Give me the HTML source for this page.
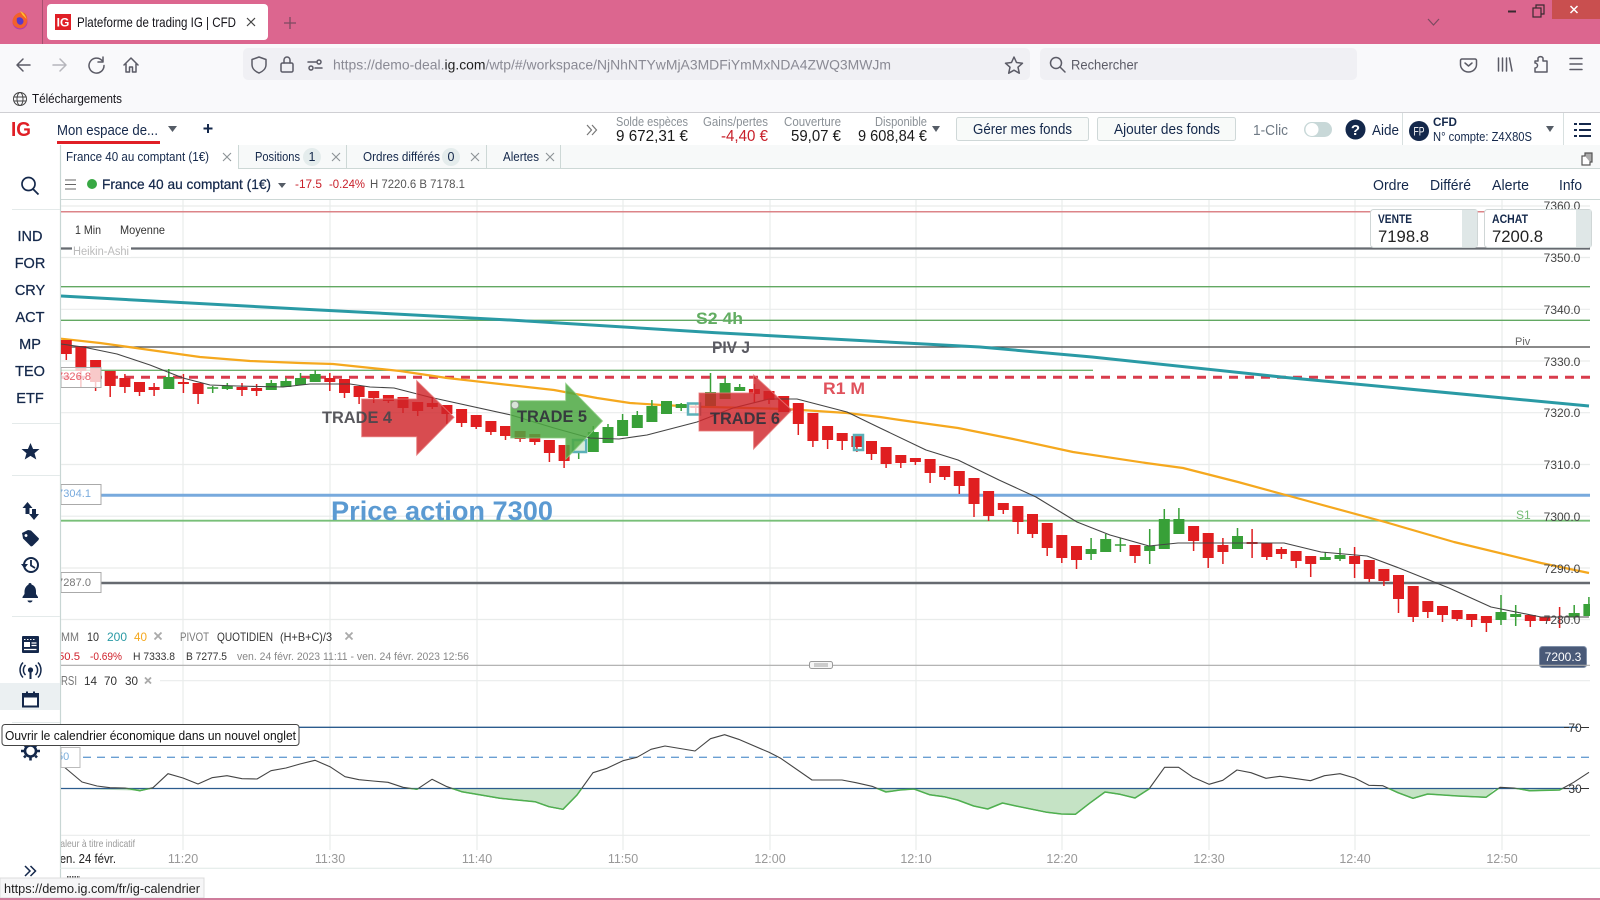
<!DOCTYPE html>
<html lang="fr"><head><meta charset="utf-8"><title>Plateforme de trading IG | CFD</title>
<style>
html,body{margin:0;padding:0;background:#fff;width:1600px;height:900px;overflow:hidden}
svg{display:block;font-family:"Liberation Sans",sans-serif}
.g{stroke:#e9eceb;stroke-width:1.2;fill:none}
.ic{fill:none;stroke:#5b5b66;stroke-width:1.5;stroke-linecap:round;stroke-linejoin:round}
.nv{font-size:14.5px;fill:#14284b;text-anchor:middle;stroke:#14284b;stroke-width:.25}
.nf{fill:#14284b}
.ns{fill:none;stroke:#14284b;stroke-width:2}
.lb{font-size:12.5px;fill:#8a9096;text-anchor:end}
.vl{font-size:16px;fill:#1a1a1a;text-anchor:end}
.tb{font-size:12.5px;fill:#14284b}
.x{stroke:#8c9396;stroke-width:1.1;fill:none}
.ax{font-size:12px;fill:#444;text-anchor:middle}
.tm{font-size:12.5px;fill:#999;text-anchor:middle}
.lg{font-size:12px;fill:#333}
</style></head><body>
<svg width="1600" height="900" viewBox="0 0 1600 900" xmlns="http://www.w3.org/2000/svg">
<defs>
<clipPath id="cc"><rect x="61" y="200" width="1529" height="465"/></clipPath>
<clipPath id="lc"><rect x="61" y="200" width="1529" height="668"/></clipPath>
<clipPath id="rb"><rect x="61" y="788.6" width="1529" height="60"/></clipPath>
<polyline id="rsi" fill="none" stroke-linejoin="round" points="61,764 63,766 82,782 97,786 110,787.7 125,788 140,790.7 153,787.7 168,773.7 183,778 198,784 212,777.7 227,775.7 242,778.7 257,779 271,770.7 286,768 300,764 315,760.3 330,766.7 345,776.7 359,779.7 373,781 388,782.3 403,787.3 417,789.3 432,779.3 447,786.7 461.7,791.7 476.7,794.3 500,798.3 535,801.7 549,806.7 563,809.3 577,795 593,772.7 607,768.3 623,760.7 637,757.3 651,749.3 665,746 695,751 710.5,738.7 724.6,734.7 738.6,739.3 769,752.3 780.7,758.3 812,780 842,780 856,782.7 872,786.3 886,792 900,790 914,789 929.5,794.7 944,796.7 957.5,800 973.7,806 987.7,809 1002.5,803 1016,806 1047,812.3 1061.4,814 1075.4,814.3 1089.5,803.3 1105,792 1120,794.3 1135,798 1149,789 1164.6,767.3 1178.6,767.3 1193,777.3 1209,784.3 1222.8,780.3 1237,770 1251,772.7 1266,778.3 1280,776.3 1310.5,780.7 1324.5,775.7 1340,773.7 1354.7,778 1368.8,785.3 1382.8,785.7 1398,792.7 1413,798.3 1427.7,794 1458,796 1486,797.3 1500,787.3 1514,788 1529.5,790.7 1559.6,790 1573.7,782.3 1589,772.3"/>
</defs>

<!-- Browser title bar -->
<rect width="1600" height="44" fill="#dc668f"/>
<line x1="42.5" y1="0" x2="42.5" y2="44" stroke="#a84f70"/>
<circle cx="20" cy="22" r="7.5" fill="#b03bb0"/>
<path d="M12.5 21c.5-6 6-9.500 10.500-8.500 4 1 5 6 4 10-1 4-5 7-9 5.500-3-1-6-3.500-5.500-7z" fill="#f2602c"/>
<path d="M17 18c3-2 6 0 6.500 3 0 3-2.500 4.500-4.500 3.500-2-1-2.800-3.500-2-6.500z" fill="#5a38c8"/>
<path d="M20 11c2.500 1 5.500 4 6.500 8l-4-4z" fill="#ffc02e"/>
<rect x="47" y="4" width="221" height="36" rx="4" fill="#fff"/>
<rect x="55" y="14" width="16" height="16" fill="#e01f26"/>
<text x="63" y="26.500" font-size="12" font-weight="700" fill="#fff" text-anchor="middle">IG</text>
<text x="77" y="27" font-size="14" fill="#15141a" textLength="159" lengthAdjust="spacingAndGlyphs">Plateforme de trading IG | CFD</text>
<path d="M247 18l8 8M255 18l-8 8" stroke="#444" stroke-width="1.200"/>
<path d="M290 17v12M284 23h12" stroke="#7c4a60" stroke-width="1.300"/>
<path d="M1428 19l5.500 6 5.500-6" fill="none" stroke="#7c4a60" stroke-width="1.200"/>
<rect x="1508" y="10.500" width="8" height="2" fill="#3a2a30"/>
<rect x="1533" y="8" width="8" height="9" fill="none" stroke="#3a2a30" stroke-width="1.200"/><path d="M1536 8V5h8v9h-3" fill="none" stroke="#3a2a30" stroke-width="1.200"/>
<rect x="1552" y="0" width="48" height="19" fill="#c94f4f"/>
<path d="M1570.500 6l7 7M1577.500 6l-7 7" stroke="#fff" stroke-width="1.500"/>

<!-- Nav bar -->
<rect y="44" width="1600" height="68" fill="#f9f9fb"/>
<path d="M30 65H17M23 59l-6 6 6 6" class="ic"/>
<path d="M53 65h13M60 59l6 6-6 6" class="ic" style="stroke:#b6b6bc"/>
<path d="M102 60.500a7.500 7.500 0 1 0 2 5M103 57v5h-5" class="ic"/>
<path d="M124 65l7-7 7 7M126 64v8h3.500v-5h3v5h3.500v-8" class="ic"/>
<rect x="243" y="48" width="787" height="32" rx="5" fill="#f0f0f4"/>
<path d="M259 57l7 2.500v5c0 4-3 7-7 8.500-4-1.500-7-4.500-7-8.500v-5z" class="ic"/>
<rect x="281" y="63" width="12" height="9" rx="1.500" class="ic"/><path d="M284 63v-3a3 3 0 0 1 6 0v3" class="ic"/>
<path d="M308 62h8M315 68h7" class="ic"/><circle cx="319" cy="62" r="2" class="ic"/><circle cx="311" cy="68" r="2" class="ic"/>
<text x="333" y="69.500" font-size="14" fill="#8a8a94" textLength="558" lengthAdjust="spacingAndGlyphs">https://demo-deal.<tspan fill="#222">ig.com</tspan>/wtp/#/workspace/NjNhNTYwMjA3MDFiYmMxNDA4ZWQ3MWJm</text>
<path d="M1014 57l2.500 5.500 6 .7-4.500 4 1.300 6-5.300-3-5.300 3 1.300-6-4.500-4 6-.7z" class="ic"/>
<rect x="1040" y="48" width="317" height="32" rx="5" fill="#f0f0f4"/>
<circle cx="1056" cy="63" r="5.500" class="ic"/><path d="M1060 67l5 5" class="ic"/>
<text x="1071" y="69.500" font-size="14" fill="#5b5b66" textLength="67" lengthAdjust="spacingAndGlyphs">Rechercher</text>
<path d="M1462 59h13a1.500 1.500 0 0 1 1.500 1.500v4a8 7.500 0 0 1-16 0v-4a1.500 1.500 0 0 1 1.500-1.500zM1465 63l3.500 3 3.500-3" class="ic"/>
<path d="M1498.500 58v13M1502.500 58v13M1506.500 58v13M1509.500 58l2.500 13" class="ic"/>
<path d="M1538 58a3 3 0 0 1 5 0v3h4v11h-12v-4a2.500 2.500 0 0 0 0-5v-2h3z" class="ic"/>
<path d="M1570 58.500h12M1570 64h12M1570 69.500h12" class="ic"/>

<!-- Bookmarks -->
<circle cx="20" cy="99" r="6.500" fill="none" stroke="#444" stroke-width="1"/><ellipse cx="20" cy="99" rx="3" ry="6.500" fill="none" stroke="#444"/><path d="M13.500 97h13M13.500 101h13" stroke="#444"/>
<text x="32" y="103" font-size="12.500" fill="#15141a" textLength="90" lengthAdjust="spacingAndGlyphs">Téléchargements</text>
<line x1="0" y1="112.500" x2="1600" y2="112.500" stroke="#cfcfd3"/>

<!-- App bar -->
<rect y="113" width="1600" height="32" fill="#fff"/>
<text x="11" y="136" font-size="20" font-weight="700" fill="#e01f26" textLength="20" lengthAdjust="spacingAndGlyphs">IG</text>
<text x="57" y="135" font-size="14.500" fill="#14284b" textLength="101" lengthAdjust="spacingAndGlyphs">Mon espace de...</text>
<rect x="57" y="141" width="103" height="3" fill="#e01f26"/>
<path d="M168 126h9l-4.500 6z" fill="#555c66"/>
<path d="M208 124v9M203.500 128.500h9" stroke="#14284b" stroke-width="2"/>
<path d="M587 125l4.500 5-4.500 5M592 125l4.500 5-4.500 5" fill="none" stroke="#777" stroke-width="1.200"/>
<text class="lb" x="688" y="126" textLength="72" lengthAdjust="spacingAndGlyphs">Solde espèces</text>
<text class="vl" x="688" y="141" textLength="72" lengthAdjust="spacingAndGlyphs">9 672,31 €</text>
<text class="lb" x="768" y="126" textLength="65" lengthAdjust="spacingAndGlyphs">Gains/pertes</text>
<text class="vl" x="768" y="141" style="fill:#c8202a" textLength="47" lengthAdjust="spacingAndGlyphs">-4,40 €</text>
<text class="lb" x="841" y="126" textLength="57" lengthAdjust="spacingAndGlyphs">Couverture</text>
<text class="vl" x="841" y="141" textLength="50" lengthAdjust="spacingAndGlyphs">59,07 €</text>
<text class="lb" x="927" y="126" textLength="52" lengthAdjust="spacingAndGlyphs">Disponible</text>
<text class="vl" x="927" y="141" textLength="69" lengthAdjust="spacingAndGlyphs">9 608,84 €</text>
<path d="M932 126h8l-4 6z" fill="#555c66"/>
<rect x="956.500" y="117.500" width="132" height="23" rx="2" fill="#f8faf9" stroke="#cfd8d8"/>
<text x="973" y="134" font-size="14.500" fill="#14284b" textLength="99" lengthAdjust="spacingAndGlyphs">Gérer mes fonds</text>
<rect x="1097.500" y="117.500" width="138" height="23" rx="2" fill="#f8faf9" stroke="#cfd8d8"/>
<text x="1114" y="134" font-size="14.500" fill="#14284b" textLength="106" lengthAdjust="spacingAndGlyphs">Ajouter des fonds</text>
<text x="1253" y="135" font-size="14.500" fill="#6f7a85" textLength="35" lengthAdjust="spacingAndGlyphs">1-Clic</text>
<rect x="1304" y="122" width="28" height="15" rx="7.500" fill="#c8d8d8"/><circle cx="1312" cy="129.500" r="6.500" fill="#fff"/>
<circle cx="1355.500" cy="129.500" r="10" fill="#14284b"/><text x="1355.500" y="135" font-size="15" font-weight="700" fill="#fff" text-anchor="middle">?</text>
<text x="1372" y="135" font-size="14.500" fill="#14284b" textLength="27" lengthAdjust="spacingAndGlyphs">Aide</text>
<line x1="1402.500" y1="113" x2="1402.500" y2="145" stroke="#d8e0e0"/>
<circle cx="1419" cy="131" r="10" fill="#14284b"/><text x="1419" y="135.500" font-size="12" fill="#fff" text-anchor="middle" textLength="11" lengthAdjust="spacingAndGlyphs">FP</text>
<text x="1433" y="126" font-size="12" font-weight="700" fill="#14284b" textLength="24" lengthAdjust="spacingAndGlyphs">CFD</text>
<text x="1433" y="141" font-size="12.500" fill="#14284b" textLength="99" lengthAdjust="spacingAndGlyphs">N° compte: Z4X80S</text>
<path d="M1546 126h8l-4 6z" fill="#555c66"/>
<line x1="1563.500" y1="113" x2="1563.500" y2="145" stroke="#d8e0e0"/>
<path d="M1574 123h3v2h-3zM1574 129h3v2h-3zM1574 135h3v2h-3z" fill="#14284b"/><path d="M1579 124h12M1579 130h12M1579 136h12" stroke="#14284b" stroke-width="2"/>

<!-- Tab bar -->
<rect x="60" y="145" width="1540" height="23" fill="#f7f9f9"/>
<rect x="60" y="145" width="178" height="24" fill="#fff"/>
<line x1="60" y1="168.500" x2="1600" y2="168.500" stroke="#cdd8d6"/>
<rect x="60" y="166" width="178" height="3" fill="#fff"/>
<path d="M238.500 145v23M346.500 145v23M486.500 145v23M560.500 145v23" stroke="#cdd8d6"/>
<text class="tb" x="66" y="161" textLength="143" lengthAdjust="spacingAndGlyphs">France 40 au comptant (1€)</text>
<path class="x" d="M223 153l8 8M231 153l-8 8"/>
<text class="tb" x="255" y="161" textLength="45" lengthAdjust="spacingAndGlyphs">Positions</text>
<circle cx="312" cy="157" r="9" fill="#e4ecec"/><text class="tb" x="312" y="161" text-anchor="middle">1</text>
<path class="x" d="M332 153l8 8M340 153l-8 8"/>
<text class="tb" x="363" y="161" textLength="77" lengthAdjust="spacingAndGlyphs">Ordres différés</text>
<circle cx="451" cy="157" r="9" fill="#e4ecec"/><text class="tb" x="451" y="161" text-anchor="middle">0</text>
<path class="x" d="M471 153l8 8M479 153l-8 8"/>
<text class="tb" x="503" y="161" textLength="36" lengthAdjust="spacingAndGlyphs">Alertes</text>
<path class="x" d="M546 153l8 8M554 153l-8 8"/>
<rect x="1582" y="156" width="8" height="9" fill="#fff" stroke="#555" stroke-width="1.200"/><path d="M1585 156v-3h7v9h-2" fill="#aaa" stroke="#555" stroke-width="1.200"/>

<!-- Chart header -->
<path d="M65 180h11M65 184.500h11M65 189h11" stroke="#666" stroke-width="1"/>
<circle cx="92" cy="184" r="5" fill="#38a844"/>
<text x="102" y="189" font-size="14" fill="#14284b" stroke="#14284b" stroke-width=".25" textLength="169" lengthAdjust="spacingAndGlyphs">France 40 au comptant (1€)</text>
<path d="M278 183h8l-4 5z" fill="#555c66"/>
<text x="295" y="188" font-size="11.500" fill="#c8202a" textLength="27" lengthAdjust="spacingAndGlyphs">-17.5</text>
<text x="329" y="188" font-size="11.500" fill="#c8202a" textLength="36" lengthAdjust="spacingAndGlyphs">-0.24%</text>
<text x="370" y="188" font-size="11.500" fill="#555" textLength="95" lengthAdjust="spacingAndGlyphs">H 7220.6 B 7178.1</text>
<text x="1373" y="190" font-size="14.500" fill="#14284b" textLength="36" lengthAdjust="spacingAndGlyphs">Ordre</text>
<text x="1430" y="190" font-size="14.500" fill="#14284b" textLength="41" lengthAdjust="spacingAndGlyphs">Différé</text>
<text x="1492" y="190" font-size="14.500" fill="#14284b" textLength="37" lengthAdjust="spacingAndGlyphs">Alerte</text>
<text x="1559" y="190" font-size="14.500" fill="#14284b" textLength="23" lengthAdjust="spacingAndGlyphs">Info</text>
<line x1="60" y1="199.500" x2="1600" y2="199.500" stroke="#cdd8d6"/>

<!-- Sidebar -->
<line x1="60.500" y1="145" x2="60.500" y2="880" stroke="#c8d6d4" stroke-width="1.200"/>
<circle cx="28.500" cy="184" r="6.500" fill="none" stroke="#14284b" stroke-width="1.700"/><path d="M33 189l5.500 5.500" stroke="#14284b" stroke-width="1.800"/>
<path d="M12 209.500h48M12 423.500h48M12 475.500h48M12 616.500h48M12 722.500h48" stroke="#e4eaea"/>
<text class="nv" x="30" y="241">IND</text><text class="nv" x="30" y="268">FOR</text><text class="nv" x="30" y="295">CRY</text><text class="nv" x="30" y="322">ACT</text><text class="nv" x="30" y="349">MP</text><text class="nv" x="30" y="376">TEO</text><text class="nv" x="30" y="403">ETF</text>
<path class="nf" d="M30.500 443l2.600 6h6.400l-5 4.200 1.800 6.300-5.800-3.600-5.800 3.600 1.800-6.300-5-4.200h6.400z"/>
<path class="nf" d="M27.500 502l5 6h-3v6h-4v-6h-3z"/><path class="nf" d="M32 509h4v5h3l-5 6-5-6h3z"/>
<path class="nf" d="M22 533l6-3 3 .5 8 8-.5 1.500-6 6-1.500.5-8-8-.5-3zm4 1a1.500 1.500 0 1 0 .01 0z"/>
<circle cx="31" cy="565" r="7" fill="none" stroke="#14284b" stroke-width="2"/><path d="M31 560v5.500l4 2.500" fill="none" stroke="#14284b" stroke-width="1.800"/><path class="nf" d="M21 564h7l-3.500 4.500z"/>
<path class="nf" d="M30 583c1 0 1.500.5 1.500 1.500 3 1 4.500 3.500 4.500 7v2.500l2 3v1H22.500v-1l2-3V592c0-3.500 1.500-6 4-7.500 0-1 .5-1.500 1.500-1.500zM27.500 600.500h5a2.500 2 0 0 1-5 0z"/>
<rect x="22" y="636" width="17" height="17" rx="1" class="nf"/><path d="M24 639.500h1.500M27 639.500h1.500M30 639.500h1.500M33 639.500h1.500" stroke="#fff"/><rect x="24" y="642" width="6" height="5" fill="#fff"/><path d="M31.500 643h5M31.500 645.500h5M24 649.500h12.500" stroke="#fff" stroke-width="1.300"/>
<rect y="683" width="60" height="27" fill="#ebf0f2"/>
<circle cx="30.500" cy="670" r="2.600" class="nf"/><path d="M30.500 671v8" stroke="#14284b" stroke-width="2"/>
<path class="ns" style="stroke-width:1.500" d="M25.500 665a7 7 0 0 0 0 10M35.500 665a7 7 0 0 1 0 10M23 662.500a11 11 0 0 0 0 15M38 662.500a11 11 0 0 1 0 15"/>
<rect x="23" y="694" width="15" height="12.500" fill="#fff" stroke="#14284b" stroke-width="2"/><rect x="23" y="693" width="15" height="4.500" class="nf"/><path d="M27 691.500v4M34 691.500v4" stroke="#14284b" stroke-width="2"/>
<circle cx="30.500" cy="751" r="5.500" fill="none" stroke="#14284b" stroke-width="2.600"/><path d="M30.500 741v20M21 751h19M24 744.500l13 13M37 744.500l-13 13" stroke="#14284b" stroke-width="2.600" stroke-dasharray="3.500 12.500"/>
<path d="M25 866l5 5-5 5M30.500 866l5 5-5 5" fill="none" stroke="#14284b" stroke-width="1.500"/>

<!-- Chart grid -->
<g class="g">
<path d="M183 200V665M330 200V665M477 200V665M623 200V665M770 200V665M916 200V665M1062 200V665M1209 200V665M1355 200V665M1502 200V665"/>
<path d="M183 666V850M330 666V850M477 666V850M623 666V850M770 666V850M916 666V850M1062 666V850M1209 666V850M1355 666V850M1502 666V850"/>
<path d="M61 206H1590M61 257.500H1590M61 309.300H1590M61 361H1590M61 412.700H1590M61 464.500H1590M61 516.200H1590M61 568H1590M61 619.500H1590M160 680.700H1590M61 835.300H1590"/>
</g>

<g clip-path="url(#lc)">
<!-- Levels -->
<line x1="61" y1="211.700" x2="1590" y2="211.700" stroke="#dc8488" stroke-width="1.500"/>
<line x1="61" y1="248.500" x2="1590" y2="248.500" stroke="#666a70" stroke-width="2.200"/>
<line x1="61" y1="286.700" x2="1590" y2="286.700" stroke="#62a862" stroke-width="1.300"/>
<line x1="61" y1="320.300" x2="1590" y2="320.300" stroke="#62a862" stroke-width="1.300"/>
<line x1="61" y1="347" x2="1590" y2="347" stroke="#444" stroke-width="1.300"/>
<line x1="61" y1="370.300" x2="1093" y2="370.300" stroke="#6cb06c" stroke-width="1.300"/>
<line x1="61" y1="377.300" x2="1590" y2="377.300" stroke="#d83c4c" stroke-width="3" stroke-dasharray="9 7"/>
<line x1="61" y1="495.300" x2="1590" y2="495.300" stroke="#78aadd" stroke-width="3"/>
<line x1="61" y1="520.700" x2="1590" y2="520.700" stroke="#78bf78" stroke-width="1.800"/>
<line x1="61" y1="583" x2="1590" y2="583" stroke="#666a70" stroke-width="2.400"/>

<!-- Moving averages -->
<polyline fill="none" stroke="#2a9aa5" stroke-width="3" stroke-linejoin="round" points="61,296 300,309 510,320 714,332.600 980,347 1092,357 1286,377.500 1589,406"/>
<polyline fill="none" stroke="#f5a81e" stroke-width="2.200" stroke-linejoin="round" points="61,338.700 100,343 150,350 200,357 250,361 300,363 333,364 400,371 447,378 500,384 554,390 597,398 630,403 661,405 697,406.700 786,409 847,413 880,417 900,420 958,428 1013,439 1073,452 1146,463 1183,468 1238,482 1293,497 1385,522 1454,542 1541,563 1589,573"/>

<!-- Candles: red wicks / bodies -->
<path stroke="#e01e20" stroke-width="1.500" fill="none" d="M66.300 340V360M80.900 346V388M95.600 360V391M110.200 371V397M124.900 374V393M139.500 382V396M154.100 383V396M183.400 374V393M198.100 383V404M242 383V396M256.600 384V396M329.800 373V391M344.500 379V398M359.100 386V404M373.700 391V403M388.400 395V403M403 397V413M417.700 402V416M432.300 397V409M446.900 405V424M461.600 409V427M476.200 415V429M490.900 421V435M505.500 426V440M520.100 431V442M534.800 434V445M549.400 440V462M564.100 445V468M695.800 404V414M754.400 384V403M769 391V404M798.300 403V435M812.900 413V447M827.600 426V449M842.200 433V450M856.900 436V452M871.500 441V460M886.100 447V468M900.800 455V468M915.400 458V465M930.100 459V483M944.700 466V480M959.300 471V494M974 478V517M988.600 491V521M1003.300 503V514M1017.900 506V534M1032.500 514V538M1047.200 523V556M1061.800 535V563M1076.500 546V569M1135 545V563M1193.600 526V551M1208.200 533V568M1222.900 538V564M1252.100 529V558M1266.800 543V560M1281.400 547V559M1296.100 551V568M1310.700 556V577M1354.600 547V578M1369.300 560V582M1383.900 569V586M1398.500 575V613M1413.200 586V622M1427.800 601V618M1442.500 606V622M1457.100 610V621M1471.700 614V627M1486.400 616V632M1530.300 615V627M1559.600 607V628"/>
<path stroke="#e01e20" stroke-width="11" fill="none" d="M66.300 340V354M80.900 346V371M95.600 360V382M110.200 371V386M124.900 378V387M139.500 382V392M154.100 387V390M183.400 382V384M198.100 383V394M242 387V390M256.600 388V391M329.800 378V382M344.500 379V393M359.100 386V397M373.700 391V398M388.400 395V401M403 397V408M417.700 402V411M432.300 403V407M446.900 405V414M461.600 409V423M476.200 415V427M490.900 421V432M505.500 426V436M520.100 431V439M534.800 434V442M549.400 440V453M564.100 445V461M695.800 406V408M754.400 389V394M769 391V400M783.700 396V412M798.300 403V424M812.900 413V441M827.600 426V440M842.200 433V441M856.900 436V447M871.500 441V454M886.100 447V464M900.800 455V463M915.400 458V462M930.100 459V473M944.700 466V477M959.300 471V486M974 478V504M988.600 491V516M1003.300 503V510M1017.900 506V522M1032.500 514V534M1047.200 523V548M1061.800 535V558M1076.500 546V560M1135 545V556M1193.600 526V541M1208.200 533V558M1222.900 545V552M1252.100 542V544M1266.800 543V557M1281.400 549V554M1296.100 551V561M1310.700 556V564M1354.600 556V564M1369.300 560V579M1383.900 569V581M1398.500 575V599M1413.200 586V617M1427.800 601V612M1442.500 606V615M1457.100 610V619M1471.700 614V620M1486.400 616V623M1530.300 615V621M1544.900 617V621"/>
<!-- Candles: green wicks / bodies -->
<path stroke="#38a038" stroke-width="1.500" fill="none" d="M168.800 369V389M212.700 386V393M227.300 383V390M271.300 380V390M285.900 378V387M300.500 373V385M315.200 370V382M578.700 440V459M593.300 426V452M608 424V443M622.600 414V436M637.300 411V428M651.900 400V422M666.500 401V414M681.200 403V411M710.500 373V406M725.100 378V399M739.700 384V391M1091.100 538V560M1105.700 534V552M1120.400 538V552M1149.700 529V564M1164.300 509V549M1178.900 508V534M1237.500 528V549M1325.300 552V560M1340 548V561M1501 595V625M1515.700 605V626M1574.200 605V619M1588.900 597V616"/>
<path stroke="#38a038" stroke-width="11" fill="none" d="M168.800 377V389M212.700 387.300V388.800M227.300 386V389M271.300 383V390M285.900 381V387M300.500 378V385M315.200 374V382M578.700 440V453M593.300 432V452M608 427V443M622.600 420V436M637.300 415V428M651.900 406V422M666.500 401V414M681.200 404V408M710.500 392V406M725.100 383V399M739.700 387V391M1091.100 549V554M1105.700 539V552M1120.400 544.300V545.800M1149.700 546V551M1164.300 519V549M1178.900 519V534M1237.500 536V549M1325.300 557V560M1340 555V559M1501 612V620M1515.700 614V617M1574.200 613V617M1588.900 604V616"/>
<!-- Teal marker squares -->
<rect x="573" y="440" width="13" height="12" fill="rgba(255,255,255,.8)" stroke="#5cb0b8" stroke-width="2.500"/>
<rect x="688" y="403.500" width="12" height="11" fill="rgba(255,255,255,.75)" stroke="#5cb0b8" stroke-width="2.500"/>
<rect x="854" y="435" width="9" height="15" fill="none" stroke="#5cb0b8" stroke-width="2.500"/>
<!-- MA10 -->
<polyline fill="none" stroke="#444" stroke-width="1.100" stroke-linejoin="round" points="61,344 83,347 117,354 150,365 183,378 210,385 237,386 283,387 310,384 350,384 370,387 394,388 429,397 511,415 554,428 590,438 619,439 647,435 697,422 733,408 769,399 797,399 847,412 880,428 926,450 958,460 999,480 1036,497 1077,522 1110,535 1149,546 1178,543 1284,543 1321,552 1367,556 1399,568 1449,588 1491,607 1541,617 1589,617"/>
<!-- Arrows -->
<path d="M361.700 399H416.700V380.700L454 417.300 416.700 455V436.700H361.700z" fill="rgba(208,36,42,.82)" stroke="rgba(230,120,120,.8)"/>
<path d="M510.700 400.700H565.700V383.300L602.500 421 565.700 459.300V438H510.700z" fill="rgba(76,168,66,.85)" stroke="rgba(140,205,130,.8)"/>
<path d="M699 393H753.600V375L791.800 410 753.600 449V431H699z" fill="rgba(208,36,42,.82)" stroke="rgba(230,120,120,.8)"/>
<circle cx="515" cy="405" r="3.800" fill="#d8e4d8" stroke="#8a9a8a"/>

<!-- Chart labels -->
<text x="322" y="423" font-size="17" font-weight="700" fill="rgba(70,70,75,.9)" textLength="70" lengthAdjust="spacingAndGlyphs">TRADE 4</text>
<text x="517" y="422" font-size="17" font-weight="700" fill="rgba(50,50,60,.92)" textLength="70" lengthAdjust="spacingAndGlyphs">TRADE 5</text>
<text x="710" y="424" font-size="17" font-weight="700" fill="rgba(50,50,60,.92)" textLength="70" lengthAdjust="spacingAndGlyphs">TRADE 6</text>
<text x="696" y="324" font-size="17" font-weight="700" fill="#62ad62" textLength="47" lengthAdjust="spacingAndGlyphs">S2 4h</text>
<text x="712" y="353" font-size="17" font-weight="700" fill="#5a5a62" textLength="38" lengthAdjust="spacingAndGlyphs">PIV J</text>
<text x="823" y="394" font-size="17" font-weight="700" fill="#e0525c" textLength="42" lengthAdjust="spacingAndGlyphs">R1 M</text>
<text x="331" y="520" font-size="27" font-weight="700" fill="#5b9ad2" textLength="222" lengthAdjust="spacingAndGlyphs">Price action 7300</text>
<text x="1515" y="345" font-size="11" fill="#666">Piv</text>
<text x="1516" y="519" font-size="12" fill="#74bb74">S1</text>

<rect x="61" y="367.500" width="40" height="20" fill="rgba(255,255,255,.76)" stroke="#aaa"/>
<text x="57" y="380" font-size="11" fill="#e8606a" textLength="34" lengthAdjust="spacing">7326.8</text>
<rect x="61" y="484.500" width="40" height="20" fill="#fff" stroke="#aaa"/>
<text x="57" y="497" font-size="11" fill="#78aadd" textLength="34" lengthAdjust="spacing">7304.1</text>
<rect x="61" y="572.500" width="40" height="20" fill="#fff" stroke="#aaa"/>
<text x="57" y="586" font-size="11" fill="#777" textLength="34" lengthAdjust="spacing">7287.0</text>
</g>

<!-- Top chart controls -->
<text x="75" y="234" font-size="12" fill="#333" textLength="26" lengthAdjust="spacingAndGlyphs">1 Min</text>
<text x="120" y="234" font-size="12" fill="#333" textLength="45" lengthAdjust="spacingAndGlyphs">Moyenne</text>
<rect x="72" y="243" width="59" height="14" fill="#fff"/>
<text x="73" y="255" font-size="11.500" fill="#bbb" textLength="56" lengthAdjust="spacingAndGlyphs">Heikin-Ashi</text>

<!-- Price axis -->
<text class="ax" x="1562" y="210">7360.0</text>
<text class="ax" x="1562" y="262">7350.0</text>
<text class="ax" x="1562" y="314">7340.0</text>
<text class="ax" x="1562" y="366">7330.0</text>
<text class="ax" x="1562" y="417">7320.0</text>
<text class="ax" x="1562" y="469">7310.0</text>
<text class="ax" x="1562" y="521">7300.0</text>
<text class="ax" x="1562" y="573">7290.0</text>
<text class="ax" x="1562" y="624">7280.0</text>
<rect x="1539.500" y="646.500" width="47" height="21" rx="3" fill="#4a5a78" stroke="#8090a8"/>
<text x="1563" y="661" font-size="12" fill="#fff" text-anchor="middle">7200.3</text>

<!-- Buy/Sell -->
<rect x="1370.500" y="209.500" width="107" height="38" rx="3" fill="#fff" stroke="#cfd6d6"/>
<rect x="1462" y="210" width="15" height="37" fill="#dfe7e7"/>
<text x="1378" y="223" font-size="11.500" fill="#14284b" font-weight="700" textLength="34" lengthAdjust="spacingAndGlyphs">VENTE</text>
<text x="1378" y="242" font-size="17" fill="#222" textLength="51" lengthAdjust="spacingAndGlyphs">7198.8</text>
<rect x="1484.500" y="209.500" width="107" height="38" rx="3" fill="#fff" stroke="#cfd6d6"/>
<rect x="1576" y="210" width="15" height="37" fill="#dfe7e7"/>
<text x="1492" y="223" font-size="11.500" fill="#14284b" font-weight="700" textLength="36" lengthAdjust="spacingAndGlyphs">ACHAT</text>
<text x="1492" y="242" font-size="17" fill="#222" textLength="51" lengthAdjust="spacingAndGlyphs">7200.8</text>

<!-- Legends -->
<g class="lg">
<text x="61" y="641" style="fill:#777" textLength="18" lengthAdjust="spacingAndGlyphs">MM</text>
<text x="87" y="641" textLength="12" lengthAdjust="spacingAndGlyphs">10</text>
<text x="107" y="641" style="fill:#2a9aa5" textLength="20" lengthAdjust="spacingAndGlyphs">200</text>
<text x="134" y="641" style="fill:#f5a81e" textLength="13" lengthAdjust="spacingAndGlyphs">40</text>
<text x="180" y="641" style="fill:#777" textLength="29" lengthAdjust="spacingAndGlyphs">PIVOT</text>
<text x="217" y="641" textLength="56" lengthAdjust="spacingAndGlyphs">QUOTIDIEN</text>
<text x="280" y="641" textLength="52" lengthAdjust="spacingAndGlyphs">(H+B+C)/3</text>
<g clip-path="url(#lc)"><text x="58" y="660" style="fill:#d0222c;font-size:11px" textLength="22" lengthAdjust="spacingAndGlyphs">50.5</text></g>
<text x="90" y="660" style="fill:#d0222c;font-size:11px" textLength="32" lengthAdjust="spacingAndGlyphs">-0.69%</text>
<text x="133" y="660" style="font-size:11px" textLength="42" lengthAdjust="spacingAndGlyphs">H 7333.8</text>
<text x="186" y="660" style="font-size:11px" textLength="41" lengthAdjust="spacingAndGlyphs">B 7277.5</text>
<text x="237" y="660" style="fill:#888;font-size:11px" textLength="232" lengthAdjust="spacingAndGlyphs">ven. 24 févr. 2023 11:11 - ven. 24 févr. 2023 12:56</text>
<text x="61" y="685" style="fill:#777;font-size:12.500px" textLength="16" lengthAdjust="spacingAndGlyphs">RSI</text>
<text x="84" y="685" textLength="13" lengthAdjust="spacingAndGlyphs">14</text>
<text x="104" y="685" textLength="13" lengthAdjust="spacingAndGlyphs">70</text>
<text x="125" y="685" textLength="13" lengthAdjust="spacingAndGlyphs">30</text>
</g>
<path d="M154.500 632.500l7 7M161.500 632.500l-7 7M345.500 632.500l7 7M352.500 632.500l-7 7M145 677.500l6 6M151 677.500l-6 6" stroke="#aaa" stroke-width="1.800"/>

<!-- Divider -->
<line x1="61" y1="665.300" x2="1590" y2="665.300" stroke="#aaa" stroke-width="1.200"/>
<rect x="809.500" y="661.500" width="23" height="7" rx="2" fill="#f6f6f6" stroke="#999"/><path d="M814 664h14M814 666h14" stroke="#888" stroke-width=".8"/>

<!-- RSI -->
<g clip-path="url(#rb)">
<polygon points="61,788.600 140,790.700 153,788.600 403,787.300 417,789.300 432,788.600 447,786.700 461.700,791.700 476.700,794.300 500,798.300 535,801.700 549,806.700 563,809.300 577,795 581,788.600 847,788.600 856,782.700 872,786.300 886,792 900,790 914,789 929.500,794.700 944,796.700 957.500,800 973.700,806 987.700,809 1002.500,803 1016,806 1047,812.300 1061.400,814 1075.400,814.300 1089.500,803.300 1105,792 1120,794.300 1135,798 1149,789 1150,788.600 1368,788.600 1382.800,785.700 1398,792.700 1413,798.300 1427.700,794 1458,796 1486,797.300 1495,788.600 1514,788 1529.500,790.700 1559.600,790 1563,788.600" fill="#c5e3c5"/>
</g>
<line x1="61" y1="727.300" x2="1578" y2="727.300" stroke="#2c5c8e" stroke-width="1.300"/>
<line x1="83" y1="757.300" x2="1590" y2="757.300" stroke="#6a9fd2" stroke-width="1.300" stroke-dasharray="8 6"/>
<line x1="61" y1="788.500" x2="1578" y2="788.500" stroke="#2c5c8e" stroke-width="1.300"/>
<use href="#rsi" stroke="#444" stroke-width="1.100"/>
<g clip-path="url(#rb)"><use href="#rsi" stroke="#4fb04f" stroke-width="1.500"/></g>
<path d="M1564 727.500h5M1581 727.500h8M1564 788.500h5M1581 788.500h8" stroke="#333"/>
<text class="ax" x="1575" y="732" style="fill:#333">70</text>
<text class="ax" x="1575" y="793" style="fill:#333">30</text>
<rect x="61" y="747.500" width="19" height="20" fill="#fff" stroke="#bbb"/>
<g clip-path="url(#lc)"><text x="57" y="760" font-size="11" fill="#7aaedc">50</text></g>

<!-- Time axis -->
<g clip-path="url(#lc)"><text x="56" y="847" font-size="10.500" fill="#999" textLength="79" lengthAdjust="spacingAndGlyphs">valeur à titre indicatif</text>
<text x="54" y="863" font-size="12.500" fill="#222" textLength="62" lengthAdjust="spacingAndGlyphs">ven. 24 févr.</text></g>
<text class="tm" x="183" y="863">11:20</text><text class="tm" x="330" y="863">11:30</text><text class="tm" x="477" y="863">11:40</text><text class="tm" x="623" y="863">11:50</text><text class="tm" x="770" y="863">12:00</text><text class="tm" x="916" y="863">12:10</text><text class="tm" x="1062" y="863">12:20</text><text class="tm" x="1209" y="863">12:30</text><text class="tm" x="1355" y="863">12:40</text><text class="tm" x="1502" y="863">12:50</text>
<line x1="60" y1="868.300" x2="1600" y2="868.300" stroke="#dfe8e6"/>
<path d="M67 877h13" stroke="#555" stroke-width="2" stroke-dasharray="1.500 1"/>

<!-- Tooltip -->
<rect x="2" y="724.500" width="297" height="21" rx="3" fill="#fff" stroke="#444"/>
<text x="5" y="740" font-size="13" fill="#111" textLength="291" lengthAdjust="spacingAndGlyphs">Ouvrir le calendrier économique dans un nouvel onglet</text>

<!-- Status -->
<rect x="0" y="878" width="204" height="20" fill="#f6f6f7" stroke="#dcdcdc"/>
<text x="4" y="893" font-size="12.500" fill="#222" textLength="196" lengthAdjust="spacingAndGlyphs">https://demo.ig.com/fr/ig-calendrier</text>
<rect y="898" width="1600" height="2" fill="#cf7c9c"/>
</svg>
</body></html>
